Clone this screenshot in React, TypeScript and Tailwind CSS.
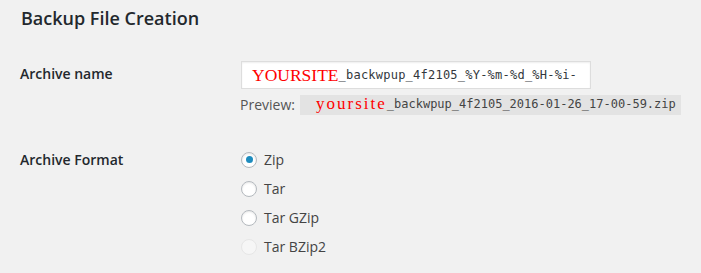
import React from 'react';

const formats = [
  { label: 'Zip', checked: true, disabled: false },
  { label: 'Tar', checked: false, disabled: false },
  { label: 'Tar GZip', checked: false, disabled: false },
  { label: 'Tar BZip2', checked: false, disabled: true },
];

function Radio({ checked, disabled }: { checked: boolean; disabled: boolean }) {
  if (disabled) {
    return <span className="w-4 h-4 rounded-full border border-[#e6e6e6] bg-[#f6f6f6] shrink-0" />;
  }
  return (
    <span className="w-4 h-4 rounded-full border border-[#b4b9be] bg-white shadow-[inset_0_1px_2px_rgba(0,0,0,0.1)] flex items-center justify-center shrink-0">
      {checked && <span className="w-[7px] h-[7px] rounded-full bg-[#1e8cbe]" />}
    </span>
  );
}

export default function App() {
  const mono = { fontFamily: '"DejaVu Sans Mono", monospace' };
  const courier = { fontFamily: '"Liberation Serif", serif' };

  return (
    <div className="w-[701px] h-[273px] bg-[#f1f1f1] px-[20px] text-[#444] overflow-hidden" style={{ fontFamily: '"Open Sans", sans-serif' }}>
      <h2 className="pl-px pt-[6px] text-[18px] leading-[24px] font-semibold text-[#23282d]">Backup File Creation</h2>

      {/* Archive name */}
      <div className="flex mt-[31px]">
        <div className="w-[221px] pt-[3px] text-[14px] leading-[20px] font-semibold text-[#23282d]">Archive name</div>
        <div className="flex flex-col">
          <div className="w-[350px] h-[28px] border border-[#ddd] bg-white shadow-[inset_0_1px_2px_rgba(0,0,0,0.07)] pl-[10px] overflow-hidden whitespace-nowrap flex items-end pb-[3px]">
            <span className="text-[17.5px] leading-[20px] font-light text-[#ff0000]" style={courier}>YOURSITE</span>
            <span className="text-[12px] leading-[20px] tracking-[0.23px] text-[#32373c]" style={mono}>_backwpup_4f2105_%Y-%m-%d_%H-%i-</span>
          </div>
          <div className="flex items-center mt-[6px] -ml-px">
            <span className="text-[14px] leading-[20px] text-[#555] w-[60px]">Preview:</span>
            <span className="h-[20px] bg-[#e3e3e3] pl-[16px] pr-[5px] flex items-end pb-[2px] whitespace-nowrap">
              <span className="text-[17px] leading-[18px] tracking-[2px] text-[#ff0000]" style={courier}>yoursite</span>
              <span className="text-[12px] leading-[18px] text-[#444]" style={mono}>_backwpup_4f2105_2016-01-26_17-00-59.zip</span>
            </span>
          </div>
        </div>
      </div>

      {/* Archive format */}
      <div className="flex mt-[30px]">
        <div className="w-[221px] pt-[5px] text-[14px] leading-[20px] font-semibold text-[#23282d]">Archive Format</div>
        <div className="flex flex-col">
          {formats.map((f) => (
            <label key={f.label} className="h-[29px] flex items-center gap-[7px] text-[14px]">
              <Radio checked={f.checked} disabled={f.disabled} />
              <span>{f.label}</span>
            </label>
          ))}
        </div>
      </div>
    </div>
  );
}
